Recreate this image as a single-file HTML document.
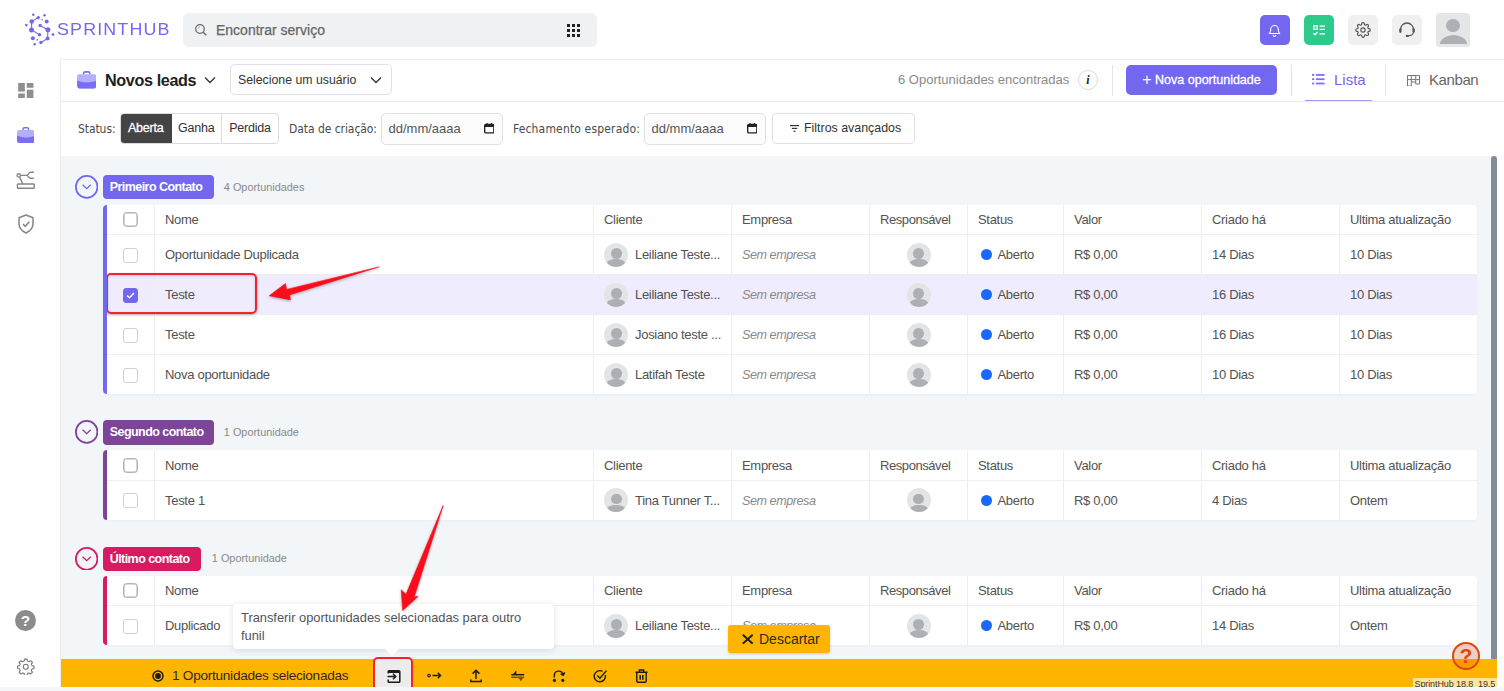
<!DOCTYPE html>
<html lang="pt-BR">
<head>
<meta charset="utf-8">
<title>SprintHub - Novos leads</title>
<style>
*{box-sizing:border-box;margin:0;padding:0}
html,body{width:1504px;height:691px;overflow:hidden;background:#fff;font-family:"Liberation Sans",sans-serif;color:#444}
.abs{position:absolute}
#header{position:absolute;left:0;top:0;width:1504px;height:60px;background:#fff;border-bottom:1px solid #ececec}
#sidebar{position:absolute;left:0;top:59px;width:61px;height:632px;background:#fff;border-right:1px solid #ececec}
#titlebar{position:absolute;left:61px;top:60px;width:1443px;height:42px;background:#fff;border-bottom:1px solid #e9e9ec}
#filterbar{position:absolute;left:61px;top:102px;width:1443px;height:54px;background:#fff}
#content{position:absolute;left:61px;top:156px;width:1430px;height:535px;background:#f3f6f8}
#scroll{position:absolute;left:1491px;top:156px;width:6px;height:503px;background:#838b98;border-radius:3px 3px 0 0}
#bbar{position:absolute;left:61px;top:659px;width:1436px;height:28px;background:#ffb400}
.logo-text{position:absolute;left:57px;top:19.500px;font-size:15.700px;letter-spacing:1px;transform:scaleX(1.14);transform-origin:0 0;color:#7367f0;line-height:20px;font-weight:400}
#search{position:absolute;left:183px;top:13px;width:414px;height:34px;background:#f0f1f3;border-radius:6px}
#search span{position:absolute;left:33px;top:8px;font-size:14px;line-height:18px;color:#666;-webkit-text-stroke:.25px #666}
.hbtn{position:absolute;top:15px;width:30px;height:30px;border-radius:5px}
.t13{font-size:13px;line-height:16px}
table{border-collapse:collapse}
.grp{position:absolute;left:0;width:1429px}
.badge{position:absolute;height:24.300px;border-radius:4px;color:#fff;font-size:12.5px;line-height:24px;font-weight:700;padding:0 7px;letter-spacing:-0.55px;white-space:nowrap}
.cnt{position:absolute;font-size:10.900px;color:#8a8a8a;line-height:12px;white-space:nowrap;margin:-1.300px 0 0 -1.200px}
.circ{position:absolute;width:23.400px;height:23.800px}
.tbl{position:absolute;left:42px;width:1374px;background:#fff;border-radius:4px;overflow:hidden;box-shadow:0 1px 3px rgba(0,0,0,.04)}
.row{position:relative;height:40px;border-top:1px solid #eee;font-size:13px;color:#525252;letter-spacing:-.3px}
.row.h{height:29.500px;border-top:none}
.row.h .c4 span.t{letter-spacing:-.43px}
.row.sel{background:#eeecfd}
.c{position:absolute;top:0;bottom:0;border-left:1px solid #eee;white-space:nowrap;overflow:hidden}
.c span.t{position:absolute;left:10px;top:50%;margin-top:-7.600px;line-height:16px}
.c0{left:4px;width:47px;border-left:none}
.c1{left:51px;width:440px}
.c2{left:490px;width:138px}
.c3{left:628px;width:138px}
.c4{left:766px;width:98px}
.c5{left:864px;width:96px}
.c6{left:960px;width:138px}
.c7{left:1098px;width:138px}
.c8{left:1236px;width:138px}
.bar{position:absolute;left:0;top:0;bottom:0;width:4px;z-index:2}
.cb{position:absolute;left:16px;top:50%;margin-top:-7px;width:15px;height:15px;border:1px solid #d0d0d0;border-radius:3px;background:#fff}
.row.h .cb{border:1px solid #b4b4b4;border-radius:3.500px;box-shadow:inset 0 0 0 .6px #b8b8b8}
.cb.on{background:#7367f0;border-color:#7367f0}
.av{position:absolute;width:24px;height:24px;border-radius:50%;background:#e3e4e6;overflow:hidden;top:50%;margin-top:-12px}
.av:before{content:"";position:absolute;left:6.800px;top:5.200px;width:10.800px;height:10.800px;border-radius:50%;background:#aab0b4}
.av:after{content:"";position:absolute;left:3.300px;top:16.400px;width:17.800px;height:8.400px;border-radius:50%;background:#aab0b4}
.dot{position:absolute;left:13px;top:50%;margin-top:-5.500px;width:11px;height:11px;border-radius:50%;background:#1b68ff}
.em{font-style:italic;color:#8a8a8a;font-size:12.600px;letter-spacing:-.45px}
.lbl{font-family:"DejaVu Sans Condensed","DejaVu Sans","Liberation Sans",sans-serif;font-size:12px;line-height:14px;color:#4a4a4a;white-space:nowrap}
.dt{top:11px;width:122px;height:31.500px;border:1px solid #e0e1e6;border-radius:5px;background:#fcfcfd}
.dt span{position:absolute;left:6.500px;top:8px;font-size:13px;line-height:14px;color:#555;white-space:nowrap}
</style>
</head>
<body>
<div id="header">
  <svg class="abs" style="left:0;top:0" width="60" height="59" viewBox="0 0 60 59"><g fill="#7367f0" stroke="#7367f0" stroke-width="1.1"><path d="M38.3 17.6 L31.7 21.5"/><path d="M31.7 21.5 L31.5 29.9"/><path d="M31.5 29.9 L39.5 34.7"/><path d="M40.1 25.4 L47.9 29.7"/><path d="M47.9 29.7 L47.6 38.5"/><path d="M47.6 38.5 L40.9 42.5"/></g><g fill="#7367f0"><circle cx="33.3" cy="14.8" r="1.2"/><circle cx="44.6" cy="15.3" r="1.2"/><circle cx="38.3" cy="17.6" r="1.7"/><circle cx="31.7" cy="21.5" r="2.2"/><circle cx="46.7" cy="21.5" r="2.0"/><circle cx="42.1" cy="19.7" r="0.8"/><circle cx="26.3" cy="25.1" r="1.3"/><circle cx="40.1" cy="25.4" r="1.7"/><circle cx="31.5" cy="29.9" r="2.5"/><circle cx="47.9" cy="29.7" r="2.5"/><circle cx="39.5" cy="34.7" r="1.7"/><circle cx="53.0" cy="34.6" r="1.4"/><circle cx="32.9" cy="38.3" r="2.0"/><circle cx="47.6" cy="38.5" r="2.0"/><circle cx="37.3" cy="39.9" r="0.8"/><circle cx="40.9" cy="42.5" r="1.7"/><circle cx="34.7" cy="44.3" r="1.3"/></g></svg>
  <div class="logo-text">SPRINTHUB</div>
  <div id="search">
    <svg class="abs" style="left:11px;top:10px" width="14" height="14" viewBox="0 0 14 14"><circle cx="6" cy="6" r="4.3" fill="none" stroke="#666" stroke-width="1.2"/><path d="M9.2 9.2 L12.3 12.3" stroke="#666" stroke-width="1.3"/><path d="M4 5.5 A2.3 2.3 0 0 1 6 3.8" stroke="#999" stroke-width=".8" fill="none"/></svg>
    <span>Encontrar serviço</span>
    <svg class="abs" style="left:384px;top:11px" width="13" height="13" viewBox="0 0 13 13" fill="#222"><rect x="0" y="0" width="3" height="3"/><rect x="5" y="0" width="3" height="3"/><rect x="10" y="0" width="3" height="3"/><rect x="0" y="5" width="3" height="3"/><rect x="5" y="5" width="3" height="3"/><rect x="10" y="5" width="3" height="3"/><rect x="0" y="10" width="3" height="3"/><rect x="5" y="10" width="3" height="3"/><rect x="10" y="10" width="3" height="3"/></svg>
  </div>
  <div class="hbtn" style="left:1259.7px;background:#7367f0">
    <svg class="abs" style="left:7.500px;top:7.500px" width="15" height="15" viewBox="0 0 15 15" fill="none" stroke="#fff" stroke-width="1.1"><path d="M2.300 10.500 C3.800 9.300 3.700 8 3.700 6.300 A3.800 3.800 0 0 1 11.300 6.300 C11.300 8 11.200 9.300 12.700 10.500 Z" stroke-linejoin="round"/><path d="M6 12.300 A1.600 1.600 0 0 0 9 12.300"/></svg>
  </div>
  <div class="hbtn" style="left:1303.6px;background:#2dcb8b">
    <svg class="abs" style="left:9px;top:9.500px" width="12" height="11" viewBox="0 0 12 11" fill="none" stroke="#fff" stroke-width="1.3"><rect x=".8" y=".8" width="3.400" height="3.400"/><path d="M6.500 1.200 H12 M6.500 4.300 H12 M6.500 8.800 H12 M.5 8.300 L2 9.800 L4.500 7"/></svg>
  </div>
  <div class="hbtn" style="left:1347.7px;background:#f0f0f1">
    <svg class="abs" style="left:7px;top:7px" width="16" height="16" viewBox="0 0 24 24" fill="none" stroke="#555" stroke-width="1.7"><circle cx="12" cy="12" r="3.2"/><path d="M19.4 15a1.65 1.65 0 0 0 .33 1.82l.06.06a2 2 0 1 1-2.83 2.83l-.06-.06a1.65 1.65 0 0 0-1.82-.33 1.65 1.65 0 0 0-1 1.51V21a2 2 0 0 1-4 0v-.09A1.65 1.65 0 0 0 9 19.4a1.65 1.65 0 0 0-1.82.33l-.06.06a2 2 0 1 1-2.83-2.83l.06-.06a1.65 1.65 0 0 0 .33-1.82 1.65 1.65 0 0 0-1.51-1H3a2 2 0 0 1 0-4h.09A1.65 1.65 0 0 0 4.6 9a1.65 1.65 0 0 0-.33-1.82l-.06-.06a2 2 0 1 1 2.83-2.83l.06.06a1.65 1.65 0 0 0 1.82.33H9a1.65 1.65 0 0 0 1-1.51V3a2 2 0 0 1 4 0v.09a1.65 1.65 0 0 0 1 1.51 1.65 1.650 0 0 0 1.82-.33l.06-.06a2 2 0 1 1 2.83 2.83l-.06.06a1.65 1.65 0 0 0-.33 1.82V9a1.65 1.65 0 0 0 1.51 1H21a2 2 0 0 1 0 4h-.09a1.65 1.65 0 0 0-1.51 1z"/></svg>
  </div>
  <div class="hbtn" style="left:1392px;background:#f0f0f1">
    <svg class="abs" style="left:6px;top:6px" width="18" height="18" viewBox="0 0 18 18" fill="none" stroke="#555" stroke-width="1.3"><path d="M2.600 9.500 V8.400 A6.400 6.400 0 0 1 15.400 8.400 V9.500"/><rect x="1.200" y="7.300" width="2.300" height="4.600" rx="1.100" fill="#555" stroke="none"/><rect x="14.500" y="7.300" width="2.300" height="4.600" rx="1.100" fill="#555" stroke="none"/><path d="M15.300 11.500 C15 13.800 12.500 14.700 10 14.800"/><ellipse cx="9.300" cy="14.900" rx="1.600" ry="1.200" fill="#555" stroke="none"/></svg>
  </div>
  <div class="abs" style="left:1436px;top:12.500px;width:34px;height:34px;border-radius:4px;background:#e5e6e7;overflow:hidden">
    <div class="abs" style="left:10.100px;top:6.200px;width:13.800px;height:13.800px;border-radius:50%;background:#adb1b5"></div>
    <div class="abs" style="left:3.500px;top:22.300px;width:27px;height:18px;border-radius:50%;background:#adb1b5"></div>
    <div class="abs" style="left:0;top:31px;width:34px;height:3px;background:#e5e6e7"></div>
  </div>
</div>

<div id="sidebar">
  <svg class="abs" style="left:18px;top:23.800px" width="15.600" height="15.300" viewBox="0 0 16 16" fill="#8f8f8f"><rect x="0" y="0" width="7" height="9"/><rect x="9" y="0" width="7" height="5"/><rect x="0" y="11" width="7" height="5"/><rect x="9" y="7" width="7" height="9"/></svg>
  <svg class="abs" style="left:16.900px;top:67.600px" width="17.600" height="16" viewBox="0 0 18 16.400"><path d="M6.200 3.200 V2 Q6.200 .8 7.400 .8 H10.600 Q11.800 .8 11.800 2 V3.200" fill="none" stroke="#7b6ff5" stroke-width="1.500"/><path d="M0 5.200 Q0 3 2.200 3 H15.800 Q18 3 18 5.200 V14.200 Q18 16.400 15.800 16.400 H2.200 Q0 16.400 0 14.200 Z" fill="#b5aefb"/><path d="M0 9 Q9 12.600 18 9 V14.200 Q18 16.400 15.800 16.400 H2.200 Q0 16.400 0 14.200 Z" fill="#7a6ef6"/></svg>
  <svg class="abs" style="left:16px;top:111px" width="20" height="20" viewBox="0 0 20 20" fill="none" stroke="#858585" stroke-width="1.400"><circle cx="2.800" cy="5.400" r="1.700"/><path d="M4.500 5.400 H10.500 C12.500 5.400 12.500 2.300 14.500 2.300 H17.800 M10.500 5.400 C12.500 5.400 12.500 8.200 14.500 8.200 H17.800 M3.600 7 L6.800 14"/><rect x="1.400" y="14" width="16.900" height="4.300" rx=".8"/></svg>
  <svg class="abs" style="left:18px;top:155px" width="16" height="20" viewBox="0 0 16 20" fill="none" stroke="#858585" stroke-width="1.500"><path d="M8 1 L15 3.800 V10 Q15 15.500 8 19 Q1 15.500 1 10 V3.800 Z" stroke-linejoin="round"/><path d="M5 10 L7.300 12.300 L11.300 7.800"/></svg>
  <div class="abs" style="left:15px;top:550.500px;width:21px;height:21px;border-radius:50%;background:#8c8c8c;color:#fff;font-weight:700;font-size:15.500px;line-height:21px;text-align:center">?</div>
  <svg class="abs" style="left:17.200px;top:598.600px" width="17.600" height="17.600" viewBox="0 0 24 24" fill="none" stroke="#777" stroke-width="1.5"><circle cx="12" cy="12" r="3.4"/><path d="M10.3 2.500 h3.400 l.6 2.700 l2 .9 l2.400-1.500 l2.400 2.400 l-1.500 2.400 l.9 2 l2.700.6 v3.400 l-2.700.6 l-.9 2 l1.500 2.400 l-2.400 2.400 l-2.400-1.500 l-2 .9 l-.6 2.700 h-3.400 l-.6-2.700 l-2-.9 l-2.400 1.500 l-2.400-2.400 l1.500-2.400 l-.9-2 l-2.700-.6 v-3.400 l2.700-.6 l.9-2 l-1.500-2.400 l2.400-2.400 l2.400 1.500 l2-.9 z" stroke-linejoin="round" transform="translate(0,-1.000)"/></svg>
</div>
<div id="titlebar">
  <svg class="abs" style="left:16px;top:11.200px" width="19.400" height="17.400" viewBox="0 0 18 16.400"><path d="M6.200 3.200 V2 Q6.200 .8 7.400 .8 H10.600 Q11.800 .8 11.800 2 V3.200" fill="none" stroke="#7b6ff5" stroke-width="1.500"/><path d="M0 5.200 Q0 3 2.200 3 H15.800 Q18 3 18 5.200 V14.200 Q18 16.400 15.800 16.400 H2.200 Q0 16.400 0 14.200 Z" fill="#b5aefb"/><path d="M0 9 Q9 12.600 18 9 V14.200 Q18 16.400 15.800 16.400 H2.200 Q0 16.400 0 14.200 Z" fill="#7a6ef6"/></svg>
  <div class="abs" style="left:44px;top:9.600px;font-size:16.200px;letter-spacing:-.38px;line-height:20px;font-weight:700;color:#1f1f1f;white-space:nowrap">Novos leads</div>
  <svg class="abs" style="left:143px;top:16px" width="12" height="8" viewBox="0 0 12 8" fill="none" stroke="#333" stroke-width="1.3"><path d="M1 1.500 L6 6.500 L11 1.500"/></svg>
  <div class="abs" style="left:169px;top:4px;width:162px;height:31px;border:1px solid #e0e0e8;border-radius:5px;background:#fff">
    <span class="abs" style="left:7px;top:8px;font-size:12.300px;line-height:14px;color:#333;white-space:nowrap">Selecione um usuário</span>
    <svg class="abs" style="left:139px;top:11px" width="12" height="8" viewBox="0 0 12 8" fill="none" stroke="#333" stroke-width="1.3"><path d="M1 1.500 L6 6.500 L11 1.500"/></svg>
  </div>
  <div class="abs" style="left:837px;top:12px;font-size:13px;line-height:16px;color:#8a8a8a;white-space:nowrap">6 Oportunidades encontradas</div>
  <div class="abs" style="left:1017px;top:10px;width:20px;height:20px;border-radius:50%;border:1px solid #d8d8d8;background:#fff;font-family:'Liberation Serif',serif;font-style:italic;font-weight:700;font-size:12px;line-height:18px;text-align:center;color:#222">i</div>
  <div class="abs" style="left:1051px;top:5px;width:1px;height:31px;background:#e4e4e4"></div>
  <div class="abs" style="left:1065px;top:5px;width:151px;height:30px;border-radius:5px;background:#7367f0;color:#fff;font-size:12.5px;line-height:30px;text-align:center;white-space:nowrap;font-weight:500;-webkit-text-stroke:.3px #fff"><span style="font-size:16px;vertical-align:-1px;-webkit-text-stroke:0">+</span> Nova oportunidade</div>
  <div class="abs" style="left:1230px;top:5px;width:1px;height:31px;background:#e4e4e4"></div>
  <svg class="abs" style="left:1251.400px;top:14.300px" width="12.600" height="10.800" viewBox="0 0 12.600 10.800" fill="#7c71f2"><rect x="0" y="0" width="2.300" height="1.800"/><rect x="4" y="0" width="8.600" height="1.800"/><rect x="0" y="4.300" width="2.300" height="1.800"/><rect x="4" y="4.300" width="8.600" height="1.800"/><rect x="0" y="8.600" width="2.300" height="1.800"/><rect x="4" y="8.600" width="8.600" height="1.800"/></svg>
  <div class="abs" style="left:1273px;top:10.500px;font-size:15px;line-height:18px;color:#7367f0">Lista</div>
  <div class="abs" style="left:1244px;top:39.800px;width:67px;height:1.700px;background:#a39cf6"></div>
  <div class="abs" style="left:1324px;top:5px;width:1px;height:31px;background:#e4e4e4"></div>
  <svg class="abs" style="left:1346px;top:14.500px" width="13" height="11.500" viewBox="0 0 13 11.500" fill="none" stroke="#777" stroke-width="1"><path d="M.5 .5 H12.500 V9 H8.700 V7 H4.300 V11 H.5 Z M4.300 .5 V7 M8.700 .5 V7 M.5 4.600 H12.500"/></svg>
  <div class="abs" style="left:1368px;top:10.500px;font-size:15px;line-height:18px;color:#666;letter-spacing:-.4px">Kanban</div>
</div>
<div id="filterbar">
  <div class="abs lbl" style="left:17px;top:20.300px;letter-spacing:-.08px">Status:</div>
  <div class="abs" style="left:59px;top:11.400px;width:159px;height:30.500px;border:1px solid #dcdcdc;border-radius:4px;background:#fff;overflow:hidden;font-size:12.5px;line-height:28px;color:#333;text-align:center;letter-spacing:-.2px">
    <div class="abs" style="left:-1px;top:-1px;width:51.500px;height:30.500px;background:#444;color:#fff;border-radius:4px 0 0 4px;line-height:31.500px;-webkit-text-stroke:.3px #fff">Aberta</div>
    <div class="abs" style="left:50.500px;top:0;width:50.500px;height:28.500px;line-height:29.500px;border-right:1px solid #dcdcdc">Ganha</div>
    <div class="abs" style="left:101px;top:0;width:56px;height:28.500px;line-height:29.500px">Perdida</div>
  </div>
  <div class="abs lbl" style="left:228px;top:20.300px;letter-spacing:-.06px">Data de criação:</div>
  <div class="abs dt" style="left:320px"><span>dd/mm/aaaa</span><svg class="abs" style="left:101.800px;top:9px" width="10.500" height="10.700" viewBox="0 0 11 11"><rect x=".7" y="1.500" width="9.600" height="8.800" rx="1.200" fill="none" stroke="#222" stroke-width="1.400"/><rect x=".7" y="1.500" width="9.600" height="2.600" fill="#222"/><rect x="2.500" y="0" width="1.400" height="2" fill="#222"/><rect x="7.100" y="0" width="1.400" height="2" fill="#222"/></svg></div>
  <div class="abs lbl" style="left:452px;top:20.300px;letter-spacing:.16px">Fechamento esperado:</div>
  <div class="abs dt" style="left:583px"><span>dd/mm/aaaa</span><svg class="abs" style="left:101.800px;top:9px" width="10.500" height="10.700" viewBox="0 0 11 11"><rect x=".7" y="1.500" width="9.600" height="8.800" rx="1.200" fill="none" stroke="#222" stroke-width="1.400"/><rect x=".7" y="1.500" width="9.600" height="2.600" fill="#222"/><rect x="2.500" y="0" width="1.400" height="2" fill="#222"/><rect x="7.100" y="0" width="1.400" height="2" fill="#222"/></svg></div>
  <div class="abs" style="left:711px;top:11px;width:143px;height:31px;border:1px solid #e0e0e6;border-radius:4px;background:#fff">
    <svg class="abs" style="left:17px;top:11px" width="9" height="7" viewBox="0 0 9 7" fill="#333"><rect x="0" y="0" width="9" height="1.200"/><rect x="1.800" y="2.800" width="5.400" height="1.200"/><rect x="3.500" y="5.600" width="2" height="1.200"/></svg>
    <span class="abs" style="left:31px;top:7px;font-size:12.400px;line-height:14px;color:#333;white-space:nowrap">Filtros avançados</span>
  </div>
</div>
<div id="content"><div class="grp" style="top:19px"><div class="circ" style="left:14px;top:0"><svg class="abs" style="left:0;top:0" width="23.400" height="23.800" viewBox="0 0 23.400 23.800" fill="none" stroke="#7367f0"><ellipse cx="11.700" cy="11.900" rx="10.800" ry="11" stroke-width="1.800"/><path d="M7.600 9.800 L11.700 13.700 L15.800 9.800" stroke-width="1.300"/></svg></div><div class="badge" style="left:41.700px;top:0;width:111px;background:#7367f0">Primeiro Contato</div><div class="cnt" style="left:164px;top:7px">4 Oportunidades</div><div class="tbl" style="top:29.600px"><div class="bar" style="background:#7367f0"></div><div class="row h"><div class="c c0"><i class="cb"></i></div><div class="c c1"><span class="t">Nome</span></div><div class="c c2"><span class="t">Cliente</span></div><div class="c c3"><span class="t">Empresa</span></div><div class="c c4"><span class="t">Responsável</span></div><div class="c c5"><span class="t">Status</span></div><div class="c c6"><span class="t">Valor</span></div><div class="c c7"><span class="t">Criado há</span></div><div class="c c8"><span class="t">Ultima atualização</span></div></div><div class="row"><div class="c c0"><i class="cb"></i></div><div class="c c1"><span class="t">Oportunidade Duplicada</span></div><div class="c c2"><i class="av" style="left:10px"></i><span class="t" style="left:41px">Leiliane Teste...</span></div><div class="c c3"><span class="t em">Sem empresa</span></div><div class="c c4"><i class="av" style="left:36.500px"></i></div><div class="c c5"><i class="dot"></i><span class="t" style="left:29.500px">Aberto</span></div><div class="c c6"><span class="t">R$ 0,00</span></div><div class="c c7"><span class="t">14 Dias</span></div><div class="c c8"><span class="t">10 Dias</span></div></div><div class="row sel"><div class="c c0"><i class="cb on"><svg class="abs" style="left:2px;top:3px" width="9" height="7" viewBox="0 0 9 7" fill="none" stroke="#fff" stroke-width="1.500"><path d="M1 3.500 L3.400 5.800 L8 1"/></svg></i></div><div class="c c1"><span class="t">Teste</span></div><div class="c c2"><i class="av" style="left:10px"></i><span class="t" style="left:41px">Leiliane Teste...</span></div><div class="c c3"><span class="t em">Sem empresa</span></div><div class="c c4"><i class="av" style="left:36.500px"></i></div><div class="c c5"><i class="dot"></i><span class="t" style="left:29.500px">Aberto</span></div><div class="c c6"><span class="t">R$ 0,00</span></div><div class="c c7"><span class="t">16 Dias</span></div><div class="c c8"><span class="t">10 Dias</span></div></div><div class="row"><div class="c c0"><i class="cb"></i></div><div class="c c1"><span class="t">Teste</span></div><div class="c c2"><i class="av" style="left:10px"></i><span class="t" style="left:41px">Josiano teste ...</span></div><div class="c c3"><span class="t em">Sem empresa</span></div><div class="c c4"><i class="av" style="left:36.500px"></i></div><div class="c c5"><i class="dot"></i><span class="t" style="left:29.500px">Aberto</span></div><div class="c c6"><span class="t">R$ 0,00</span></div><div class="c c7"><span class="t">16 Dias</span></div><div class="c c8"><span class="t">10 Dias</span></div></div><div class="row"><div class="c c0"><i class="cb"></i></div><div class="c c1"><span class="t">Nova oportunidade</span></div><div class="c c2"><i class="av" style="left:10px"></i><span class="t" style="left:41px">Latifah Teste</span></div><div class="c c3"><span class="t em">Sem empresa</span></div><div class="c c4"><i class="av" style="left:36.500px"></i></div><div class="c c5"><i class="dot"></i><span class="t" style="left:29.500px">Aberto</span></div><div class="c c6"><span class="t">R$ 0,00</span></div><div class="c c7"><span class="t">10 Dias</span></div><div class="c c8"><span class="t">10 Dias</span></div></div></div></div><div class="grp" style="top:264.300px"><div class="circ" style="left:14px;top:0"><svg class="abs" style="left:0;top:0" width="23.400" height="23.800" viewBox="0 0 23.400 23.800" fill="none" stroke="#7e4497"><ellipse cx="11.700" cy="11.900" rx="10.800" ry="11" stroke-width="1.800"/><path d="M7.600 9.800 L11.700 13.700 L15.800 9.800" stroke-width="1.300"/></svg></div><div class="badge" style="left:41.700px;top:0;width:111.400px;background:#7e4497">Segundo contato</div><div class="cnt" style="left:164px;top:7px">1 Oportunidade</div><div class="tbl" style="top:30.100px"><div class="bar" style="background:#7e4497"></div><div class="row h"><div class="c c0"><i class="cb"></i></div><div class="c c1"><span class="t">Nome</span></div><div class="c c2"><span class="t">Cliente</span></div><div class="c c3"><span class="t">Empresa</span></div><div class="c c4"><span class="t">Responsável</span></div><div class="c c5"><span class="t">Status</span></div><div class="c c6"><span class="t">Valor</span></div><div class="c c7"><span class="t">Criado há</span></div><div class="c c8"><span class="t">Ultima atualização</span></div></div><div class="row"><div class="c c0"><i class="cb"></i></div><div class="c c1"><span class="t">Teste 1</span></div><div class="c c2"><i class="av" style="left:10px"></i><span class="t" style="left:41px">Tina Tunner T...</span></div><div class="c c3"><span class="t em">Sem empresa</span></div><div class="c c4"><i class="av" style="left:36.500px"></i></div><div class="c c5"><i class="dot"></i><span class="t" style="left:29.500px">Aberto</span></div><div class="c c6"><span class="t">R$ 0,00</span></div><div class="c c7"><span class="t">4 Dias</span></div><div class="c c8"><span class="t">Ontem</span></div></div></div></div><div class="grp" style="top:390.600px"><div class="circ" style="left:14px;top:0"><svg class="abs" style="left:0;top:0" width="23.400" height="23.800" viewBox="0 0 23.400 23.800" fill="none" stroke="#d81b60"><ellipse cx="11.700" cy="11.900" rx="10.800" ry="11" stroke-width="1.800"/><path d="M7.600 9.800 L11.700 13.700 L15.800 9.800" stroke-width="1.300"/></svg></div><div class="badge" style="left:41.700px;top:0;width:98px;background:#d81b60">Último contato</div><div class="cnt" style="left:152px;top:7px">1 Oportunidade</div><div class="tbl" style="top:29.100px"><div class="bar" style="background:#d81b60"></div><div class="row h"><div class="c c0"><i class="cb"></i></div><div class="c c1"><span class="t">Nome</span></div><div class="c c2"><span class="t">Cliente</span></div><div class="c c3"><span class="t">Empresa</span></div><div class="c c4"><span class="t">Responsável</span></div><div class="c c5"><span class="t">Status</span></div><div class="c c6"><span class="t">Valor</span></div><div class="c c7"><span class="t">Criado há</span></div><div class="c c8"><span class="t">Ultima atualização</span></div></div><div class="row"><div class="c c0"><i class="cb"></i></div><div class="c c1"><span class="t">Duplicado</span></div><div class="c c2"><i class="av" style="left:10px"></i><span class="t" style="left:41px">Leiliane Teste...</span></div><div class="c c3"><span class="t em">Sem empresa</span></div><div class="c c4"><i class="av" style="left:36.500px"></i></div><div class="c c5"><i class="dot"></i><span class="t" style="left:29.500px">Aberto</span></div><div class="c c6"><span class="t">R$ 0,00</span></div><div class="c c7"><span class="t">14 Dias</span></div><div class="c c8"><span class="t">Ontem</span></div></div></div></div></div>
<div id="scroll"></div>
<div id="bbar">
  <svg class="abs" style="left:91px;top:11px" width="12" height="12" viewBox="0 0 12 12"><circle cx="6" cy="6" r="5" fill="none" stroke="#1c1c1c" stroke-width="1.500"/><circle cx="6" cy="6" r="2.900" fill="#1c1c1c"/></svg>
  <div class="abs" style="left:111px;top:8px;font-size:13.600px;line-height:18px;color:#2d2a20;white-space:nowrap;letter-spacing:-.26px">1 Oportunidades selecionadas</div>
  <div class="abs" style="left:313px;top:-1px;width:38px;height:32px;background:#ececec;border-radius:3px"></div>
  <svg class="abs" style="left:326px;top:10.500px" width="14" height="13" viewBox="0 0 14 13" fill="none" stroke="#1c1c1c" stroke-width="1.500"><path d="M1.200 3.500 V1.600 Q1.200 .8 2 .8 H12 Q12.800 .8 12.800 1.600 V11.400 Q12.800 12.200 12 12.200 H2 Q1.200 12.200 1.200 11.400 V9.500"/><path d="M.5 6.500 H8.500 M6 3.800 L8.800 6.500 L6 9.200"/><path d="M1.200 2 H12.800" stroke-width="2"/></svg>
  <svg class="abs" style="left:366px;top:12px" width="15" height="9" viewBox="0 0 15 9" fill="none" stroke="#1c1c1c" stroke-width="1.400"><circle cx="2" cy="4.500" r="1.300" fill="none" stroke-width="1.100"/><path d="M5.500 4.500 H13.500 M10.800 1.800 L13.600 4.500 L10.800 7.200"/></svg>
  <svg class="abs" style="left:409px;top:10px" width="12" height="14" viewBox="0 0 12 14" fill="none" stroke="#1c1c1c" stroke-width="1.500"><path d="M6 10 V1.500 M2.600 4.600 L6 1.200 L9.400 4.600 M.8 10.500 V12.600 H11.200 V10.500"/></svg>
  <svg class="abs" style="left:450px;top:10.500px" width="14" height="12" viewBox="0 0 14 12"><path d="M.3 4.700 H13.200" stroke="#1c1c1c" stroke-width="1.500"/><path d="M1.800 4.700 L5.300 .2 V4.700 Z" fill="#1c1c1c"/><path d="M.3 7.300 H13.200" stroke="#6b540c" stroke-width="1.500"/><path d="M7.300 7.500 H12.300 L9.900 11.300 Z" fill="#6b540c"/></svg>
  <svg class="abs" style="left:491px;top:10px" width="14" height="14" viewBox="0 0 14 14" fill="none" stroke="#1c1c1c" stroke-width="1.400"><path d="M2.300 8.500 V6.500 A4.400 4.400 0 0 1 11 5.600 M8.600 4.800 L11.300 6.200 L12.700 3.400"/><circle cx="2.400" cy="11.400" r="1.300" fill="#1c1c1c" stroke-width=".6"/><circle cx="10.800" cy="11.400" r="1.300" fill="#1c1c1c" stroke-width=".6"/></svg>
  <svg class="abs" style="left:532px;top:9.500px" width="15" height="14" viewBox="0 0 15 14" fill="none" stroke="#1c1c1c" stroke-width="1.400"><path d="M12.300 6 A5.600 5.600 0 1 1 9.500 2.300"/><path d="M4.300 6.600 L6.900 9.200 L13.500 1.600"/></svg>
  <svg class="abs" style="left:574px;top:9.500px" width="13" height="14" viewBox="0 0 13 14" fill="none" stroke="#1c1c1c" stroke-width="1.400"><path d="M.5 3.300 H12.500 M4.300 3 V1 H8.700 V3 M1.800 3.500 V12 Q1.800 13.200 3 13.200 H10 Q11.200 13.200 11.200 12 V3.500"/><path d="M5.200 6 V10.800 M7.800 6 V10.800" stroke-width="1.500"/></svg>
</div>
<div class="abs" style="left:1413px;top:678px;width:84px;height:9px;background:#ffe59c;overflow:hidden"><span class="abs" style="left:1.500px;top:1px;font-size:9px;line-height:11px;color:#333;white-space:nowrap;letter-spacing:-.1px">SprintHub 18.8_19.5</span></div>
<div class="abs" style="left:61px;top:687px;width:1443px;height:4px;background:#f6f7f9"></div>
<div class="abs" style="left:0;top:687px;width:61px;height:4px;background:#f6f7f9"></div>
<div class="abs" style="left:373px;top:657px;width:40px;height:30px;overflow:hidden"><div class="abs" style="left:0;top:0;width:40px;height:40px;border:2px solid #f5222b;border-radius:5px;box-shadow:0 1px 3px rgba(0,0,0,.28)"></div></div>
<div class="abs" style="left:1452px;top:642px;width:28px;height:28px;border-radius:50%;border:2.400px solid #e0460f;background:rgba(224,70,15,.22);color:#e0460f;font-weight:700;font-size:21px;line-height:24px;text-align:center">?</div>
<div class="abs" style="left:728px;top:625px;width:102px;height:28px;border-radius:3px;background:#ffb400;box-shadow:0 1px 3px rgba(0,0,0,.18)">
  <svg class="abs" style="left:14px;top:8.800px" width="11.500" height="10.500" viewBox="0 0 11.500 10.500" stroke="#1d1d1d" stroke-width="1.900" fill="none"><path d="M.8 .8 L10.700 9.700 M10.700 .8 L.8 9.700"/></svg>
  <span class="abs" style="left:31px;top:5px;font-size:14px;line-height:18px;color:#2b2b2b;white-space:nowrap">Descartar</span>
</div>
<div class="abs" style="left:233px;top:604px;width:321px;height:45px;border-radius:4px;background:#fff;box-shadow:0 1px 6px rgba(0,0,0,.13)">
  <div class="abs" style="left:8px;top:5px;width:305px;font-size:12.900px;line-height:18px;color:#50545a;letter-spacing:-.02px">Transferir oportunidades selecionadas para outro funil</div>
  <div class="abs" style="left:152px;top:45px;width:0;height:0;border-left:7px solid transparent;border-right:7px solid transparent;border-top:7px solid #fff"></div>
</div>
<div class="abs" style="left:105.500px;top:273.400px;width:151px;height:41px;border:2px solid #f5222b;border-radius:5px;box-shadow:0 1px 3px rgba(0,0,0,.28),inset 0 1px 3px rgba(0,0,0,.14)"></div>
<svg class="abs" style="left:0;top:0;pointer-events:none;filter:drop-shadow(0 1px 1.500px rgba(0,0,0,.3))" width="1504" height="691" viewBox="0 0 1504 691">
  <path d="M269.200 295.800 L285.500 283.500 L286.600 289.400 L378.900 266.900 L289.500 294.900 L290.500 299.900 Z" fill="#fb0d1b" stroke="#fb0d1b" stroke-width=".6" stroke-linejoin="round"/>
  <path d="M402.700 610.500 L401.200 589.800 L406 594.300 L443.200 505.400 L414.300 596.800 L418.100 596.400 Z" fill="#fb0d1b" stroke="#fb0d1b" stroke-width=".6" stroke-linejoin="round"/>
</svg>

</body>
</html>
